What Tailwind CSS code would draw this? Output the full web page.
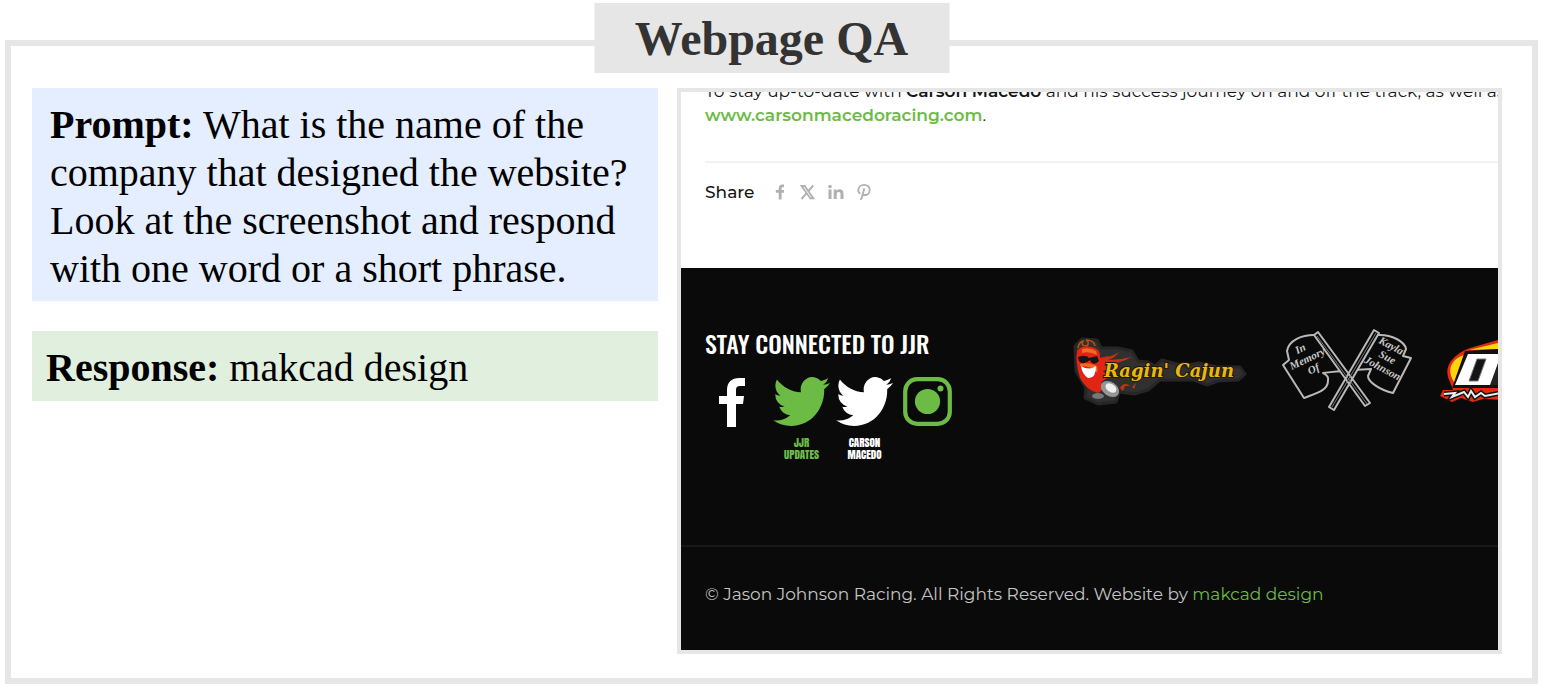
<!DOCTYPE html>
<html lang="en">
<head>
<meta charset="utf-8">
<meta name="viewport" content="width=device-width, initial-scale=1">
<title>Webpage QA</title>
<script src="https://cdn.jsdelivr.net/npm/@tailwindcss/browser@4"></script>
</head>
<body class="min-h-screen bg-white flex flex-col pt-10 pb-[5px] pl-[5px] pr-[7px] font-['Liberation_Serif',serif] text-black">
<main class="relative grow border-6 border-[#e6e6e6] pt-[42px] pb-6 pl-[21px] pr-[30px] grid grid-cols-[626fr_825fr] gap-[19px]">
  <h1 class="absolute left-1/2 -translate-x-1/2 -top-[43px] w-[355px] h-[70px] bg-[#e6e6e6] text-[#333] text-5xl font-bold leading-[72px] text-center">Webpage QA</h1>

  <section class="min-w-0 flex flex-col gap-[30px] text-[40px] leading-[48px]">
    <p class="bg-[#e4eefe] pt-[13px] pb-2 pl-[18px] pr-4"><b>Prompt:</b> What is the name of the company that designed the website? Look at the screenshot and respond with one word or a short phrase.</p>
    <p class="bg-[#e1efdf] pt-[13px] pb-[9px] px-3.5"><b>Response:</b> makcad design</p>
  </section>

  <article class="min-w-0 overflow-hidden border-4 border-[#e6e6e6] flex flex-col font-[Montserrat,Inter,sans-serif] text-[17px] leading-6 text-[#161616]">
    <div class="pl-6">
      <p class="-mt-[13px] whitespace-nowrap">To stay up-to-date with <b class="font-semibold">Carson Macedo</b> and his success journey on and off the track, as well as<br><a href="#" class="font-semibold text-[#6cbb45]">www.carsonmacedoracing.com</a>.</p>
      <div class="mt-[34px] border-t-2 border-[#f2f2f2] pt-[17px] h-[107px] flex items-start">
        <span class="w-[67px] font-medium">Share</span>
        <div class="flex items-center gap-3 h-6 text-[#b0b0b0]">
          <a href="#" aria-label="Facebook"><svg class="w-4 h-4" viewBox="0 0 16 16" fill="currentColor"><path d="M6.700 15.500V8.700H3.800V5.900H6.700V4.700C6.700 2 8.200 .6 10.600 .6H12V3.300H11C10 3.300 9.600 3.800 9.600 4.700V5.900H12V8.700H9.600V15.500Z"/></svg></a>
          <a href="#" aria-label="X"><svg class="w-4 h-4" viewBox="0 0 16 16"><path d="M1.600 2H4.700L13.400 14.400H10.300Z" fill="none" stroke="currentColor" stroke-width="1.800"/><path d="M13.200 1.300L8.400 7.200M6.600 9.200L1.500 15" stroke="currentColor" stroke-width="2"/></svg></a>
          <a href="#" aria-label="LinkedIn"><svg class="w-4 h-4" viewBox="0 0 16 16" fill="currentColor"><circle cx="2" cy="2.500" r="1.800"/><path d="M.5 5.500H3.500V15H.5ZM5.700 5.500H8.600V6.800C9.300 5.700 10.300 5.200 11.600 5.200C14.300 5.200 15.500 6.800 15.500 9.600V15H12.500V10.100C12.500 8.600 12 7.900 10.800 7.900C9.400 7.900 8.700 8.800 8.700 10.200V15H5.700Z"/></svg></a>
          <a href="#" aria-label="Pinterest"><svg class="w-4 h-4" viewBox="0 0 16 16" fill="none" stroke="currentColor" stroke-width="1.800"><path d="M4.400 9.600C2.800 9 2.300 7.700 2.300 6.200C2.300 3.200 4.800 .9 8.200 .9C11.400 .9 13.700 2.800 13.700 5.600C13.700 8.800 11.900 11 9.600 11C8.100 11 7.100 10.300 6.800 9.400M8.300 4.500L5.800 13.500C5.600 14.300 5 15.100 4.200 15.800"/></svg></a>
        </div>
      </div>
    </div>

    <footer class="grow bg-[#0a0a0a] text-[#c4c4c4]">
      <div class="h-[279px] border-b-2 border-[#181818] pt-[60px] pl-6 flex items-start">
        <section class="w-[367px] shrink-0">
          <h2 class="font-[Oswald,'Roboto_Condensed',Roboto,sans-serif] font-medium text-white text-2xl leading-[30px] whitespace-nowrap">STAY CONNECTED TO JJR</h2>
          <div class="mt-[19px] flex items-start font-[Anton,'Roboto_Condensed',Roboto,sans-serif] text-[11px] leading-3 text-center">
            <a href="#" aria-label="Facebook" class="w-[54px] mr-[11px] flex justify-center text-white"><svg class="w-[26px] h-[50px]" viewBox="0 0 26 50" fill="currentColor"><path d="M8 50V27H0V19H8V13C8 5 13 1 20 1H26V9H21C18 9 17 10.500 17 13V19H25L24 27H17V50Z"/></svg></a>
            <a href="#" class="w-[63px] flex flex-col items-center gap-[11px] text-[#6cbb45]"><svg class="w-[57px] h-[49px]" viewBox="0 2.200 24 19.600" preserveAspectRatio="none" fill="currentColor"><path d="M23.953 4.570a10 10 0 01-2.825.775 4.958 4.958 0 002.163-2.723c-.951.555-2.005.959-3.127 1.184a4.920 4.920 0 00-8.384 4.482C7.690 8.095 4.067 6.130 1.640 3.162a4.822 4.822 0 00-.666 2.475c0 1.710.870 3.213 2.188 4.096a4.904 4.904 0 01-2.228-.616v.060a4.923 4.923 0 003.946 4.827 4.996 4.996 0 01-2.212.085 4.936 4.936 0 004.604 3.417 9.867 9.867 0 01-6.102 2.105c-.390 0-.779-.023-1.170-.067a13.995 13.995 0 007.557 2.209c9.053 0 13.998-7.496 13.998-13.985 0-.210 0-.420-.015-.630A9.935 9.935 0 0024 4.590z"/></svg><span>JJR<br>UPDATES</span></a>
            <a href="#" class="w-[63px] flex flex-col items-center gap-[11px] text-white"><svg class="w-[57px] h-[49px]" viewBox="0 2.200 24 19.600" preserveAspectRatio="none" fill="currentColor"><path d="M23.953 4.570a10 10 0 01-2.825.775 4.958 4.958 0 002.163-2.723c-.951.555-2.005.959-3.127 1.184a4.920 4.920 0 00-8.384 4.482C7.690 8.095 4.067 6.130 1.640 3.162a4.822 4.822 0 00-.666 2.475c0 1.710.870 3.213 2.188 4.096a4.904 4.904 0 01-2.228-.616v.060a4.923 4.923 0 003.946 4.827 4.996 4.996 0 01-2.212.085 4.936 4.936 0 004.604 3.417 9.867 9.867 0 01-6.102 2.105c-.390 0-.779-.023-1.170-.067a13.995 13.995 0 007.557 2.209c9.053 0 13.998-7.496 13.998-13.985 0-.210 0-.420-.015-.630A9.935 9.935 0 0024 4.590z"/></svg><span>CARSON<br>MACEDO</span></a>
            <a href="#" aria-label="Instagram" class="w-[63px] flex justify-center text-[#6cbb45]"><svg class="w-[49px] h-[49px]" viewBox="0 0 49 49" fill="currentColor"><rect x="2.200" y="2.200" width="44.600" height="44.600" rx="12" fill="none" stroke="currentColor" stroke-width="4.200"/><circle cx="24.500" cy="24.500" r="12.600"/><circle cx="37.500" cy="11.500" r="3"/></svg></a>
          </div>
        </section>

        <a href="#" aria-label="Ragin' Cajun" class="shrink-0 mr-7"><svg class="w-[180px] h-[85px]" viewBox="0 0 180 85">
          <path d="M3 18L10 11L25 12L29 20L46 20L60 23L66 33L76 34L83 38L90 32L112 38L126 35L145 39L168 39L173 46L166 52L146 53L135 57L122 52L88 52L76 62L62 66L47 64L44 74L26 76L13 70L14 60L4 43Z" fill="#303030" stroke="#262626" stroke-width="3" stroke-linejoin="round"/>
          <path d="M6 20Q7 14 11 13Q8 18 15 18Q18 14 14 12Q22 12 23 18" fill="none" stroke="#b55314" stroke-width="1.500"/>
          <path d="M29 30Q40 29 47 24Q43 30 36 32Q48 32 60 29Q47 36 32 37ZM48 60Q52 53 58 58L53 58L51 63ZM60 59l4-4-2 6" fill="#c03412"/>
          <path d="M5 23Q8 17 20 19Q29 21 28 30L37 28L31 34L42 32L32 37L39 40L31 43L37 49L29 54L33 60L26 65Q14 62 8 50Q3 34 5 23Z" fill="#e22414"/>
          <path d="M10 21Q18 19 24 23L25 27Q17 23 10 25ZM8 36Q15 34 23 37Q27 38 25 45Q22 38 8 38Z" fill="#f26a24"/>
          <path d="M6 29Q14 26 17 30L25 28L27 33Q21 39 18 32Q11 38 7 33Z" fill="#161616"/>
          <path d="M9 38Q17 43 24 38Q24 51 16 50Q10 46 9 38Z" fill="#fff"/>
          <ellipse cx="38" cy="61" rx="10" ry="7" transform="rotate(35 38 61)" fill="#969696"/><ellipse cx="39" cy="60" rx="6" ry="4" transform="rotate(35 39 60)" fill="#f0f0f0"/><ellipse cx="26" cy="68" rx="6" ry="3" fill="#777"/>
          <text x="32" y="49" font-family="DejaVu Serif, serif" font-size="18" font-weight="bold" font-style="italic" fill="#e8b80e" stroke="#201508" stroke-width="2" paint-order="stroke">Ragin' Cajun</text>
        </svg></a>

        <a href="#" aria-label="In Memory Of Kayla Sue Johnson" class="shrink-0 mr-6"><svg class="w-[134px] h-[84px]" viewBox="0 0 134 84" fill="none" stroke="#b9b9b9" stroke-width="2" stroke-linejoin="round">
          <path d="M34 7C22 7 9 12 7 23L9 32L3 37L24 70C34 66 48 63 48 53C49 48 46 47 43 45C51 44 59 43 65 43"/>
          <path d="M97 7C112 6 125 14 126 21L123 28L131 30L113 65C100 62 88 54 88 48L91 41L74 42"/>
          <path d="M34 7L85 78L90 75L38 4ZM94 2L49 79L54 82L99 5Z" fill="#0a0a0a"/>
          <path d="M37 8L87 76M96 5L52 79" stroke="#777" stroke-width="1"/>
          <g fill="#c8c8c8" stroke="none" text-anchor="middle" font-family="Liberation Serif, serif" font-size="11" font-weight="bold" font-style="italic">
            <g transform="rotate(-26 28 32)"><text x="26" y="22">In</text><text x="28" y="34">Memory</text><text x="29" y="46">Of</text></g>
            <g transform="rotate(28 107 32)"><text x="104" y="21">Kayla</text><text x="106" y="33">Sue</text><text x="107" y="45">Johnson</text></g>
          </g>
        </svg></a>

        <a href="#" aria-label="D logo" class="shrink-0"><svg class="w-[120px] h-[85px]" viewBox="0 0 120 85">
          <path d="M15 62L12 54Q6 43 13 33Q20 24 32 20L60 12H100V74L45 71L35 74L23 70L14 74L2 68L5 62Z" fill="#e52a12"/>
          <path d="M16 54Q8 41 17 32Q23 27 28 27L20 52ZM31 22L60 15H100V18L60 21Z" fill="#ffd40c"/>
          <path d="M27 23L60 21H100V60H14Z" fill="#111"/>
          <path d="M30 26H100V57H17Z" fill="#fff"/>
          <path d="M39 31H48L40 53H31Z" fill="#151515" stroke="#777" stroke-width="1"/>
          <path d="M60 35V57H52Z" fill="#222"/>
          <path d="M6 66L17 65L14 69L26 64L30 69L33 63L37 69L43 65L47 68L63 65" fill="none" stroke="#111" stroke-width="5"/>
          <path d="M6 66L17 65L14 69L26 64L30 69L33 63L37 69L43 65L47 68L63 65" fill="none" stroke="#eee" stroke-width="2"/>
        </svg></a>
      </div>
      <p class="pt-[35px] pl-6 whitespace-nowrap">© Jason Johnson Racing. All Rights Reserved. Website by <a href="#" class="text-[#6cbb45]">makcad design</a></p>
    </footer>
  </article>
</main>
</body>
</html>
